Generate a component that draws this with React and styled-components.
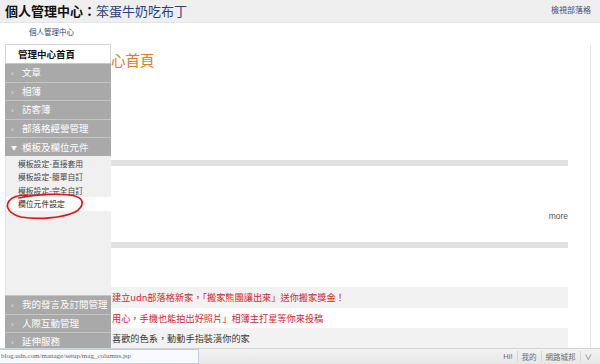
import React from "react";
import styled, { createGlobalStyle } from "styled-components";

const Global = createGlobalStyle`
  html, body { margin: 0; padding: 0; background: #fff; }
  body { font-family: "Noto Sans CJK TC", "Noto Sans", sans-serif; overflow: hidden; }
  * { box-sizing: border-box; }
`;

const Page = styled.div`
  width: 600px;
  height: 364px;
  position: relative;
  overflow: hidden;
`;

const Header = styled.header`
  height: 23px;
  background: #efefef;
  border-bottom: 1px solid #e6e6e6;
  display: flex;
  align-items: center;
  justify-content: space-between;
  padding: 0 9px 0 5px;
`;

const Title = styled.h1`
  margin: 0;
  font-size: 13px;
  line-height: 16px;
  font-weight: 700;
  color: #111;
  white-space: nowrap;
`;

const BlogName = styled.span`
  font-weight: 400;
  color: #2b3f7e;
`;

const HeaderLink = styled.a`
  font-size: 8px;
  color: #3b4f86;
  text-decoration: none;
  margin-top: -3px;
`;

const Breadcrumb = styled.div`
  height: 21px;
  line-height: 18px;
  padding-left: 29px;
  font-size: 7.5px;
  color: #34466f;
`;

const Body = styled.div`
  width: 591px;
  height: 320px;
  display: flex;
  padding-left: 5px;
  border-right: 1px solid #e8e8e8;
`;

const Sidebar = styled.nav`
  width: 106px;
  flex: none;
  position: relative;
  display: flex;
  flex-direction: column;
`;

const HomeItem = styled.div`
  height: 19px;
  background: #fff;
  border: 1px solid #d4d4d4;
  border-bottom: none;
  font-size: 9.5px;
  font-weight: 700;
  color: #111;
  line-height: 18px;
  padding-left: 12px;
`;

const MenuItem = styled.div`
  height: 18.6px;
  background: #a9a9a9;
  border-top: 1px solid #c6c6c6;
  color: #fff;
  font-size: 9.5px;
  line-height: 17px;
  display: flex;
  align-items: center;
  padding-left: 6px;
  white-space: nowrap;
`;

const Arrow = styled.span`
  width: 11px;
  flex: none;
  font-size: ${(p) => (p.$open ? "6px" : "8px")};
  color: #f4f4f4;
`;

const SubMenu = styled.div`
  height: 139px;
  background: #f0f0f0;
  border-left: 1px solid #e2e2e2;
  padding-top: 1px;
  display: flex;
  flex-direction: column;
`;

const SubItem = styled.div`
  height: 13.5px;
  line-height: 13.5px;
  font-size: 7.8px;
  color: ${(p) => (p.$active ? "#222" : "#444")};
  background: ${(p) => (p.$active ? "#fff" : "transparent")};
  padding-left: 12px;
  white-space: nowrap;
`;

const Circle = styled.svg`
  position: absolute;
  left: 0;
  top: 149px;
  width: 90px;
  height: 30px;
  overflow: visible;
  pointer-events: none;
`;

const Main = styled.main`
  width: 457px;
  flex: none;
  overflow: hidden;
  display: flex;
  flex-direction: column;
`;

const Heading = styled.h2`
  margin: 6px 0 0;
  font-size: 14.5px;
  line-height: 20px;
  font-weight: 400;
  color: #e07b28;
  white-space: nowrap;
`;

const Bar = styled.div`
  height: 6px;
  background: #e1e1e1;
  margin-top: ${(p) => p.$gap}px;
`;

const More = styled.div`
  margin-top: 44px;
  height: 12px;
  line-height: 12px;
  text-align: right;
  font-size: 8.5px;
  color: #555;
  font-family: "Liberation Sans", Arial, sans-serif;
`;

const News = styled.div`
  margin-top: 39px;
  display: flex;
  flex-direction: column;
`;

const NewsRow = styled.div`
  height: ${(p) => p.$h}px;
  background: ${(p) => (p.$shade ? "#f2f2f2" : "#fff")};
  font-size: 9.2px;
  line-height: ${(p) => p.$h}px;
  color: ${(p) => (p.$plain ? "#3a3a3a" : "#d0262a")};
  white-space: nowrap;
  padding-left: 1px;
`;

const StatusBar = styled.footer`
  position: absolute;
  left: 0;
  right: 0;
  bottom: 0;
  height: 16px;
  background: linear-gradient(#f3f3f3, #e7e7e7);
  border-top: 1px solid #d2d2d2;
  display: flex;
  align-items: center;
  justify-content: space-between;
`;

const UrlBox = styled.div`
  width: 199px;
  height: 15px;
  background: #f8fafd;
  border: 1px solid #c3ccd8;
  border-left: none;
  font-family: "Liberation Serif", serif;
  font-size: 7px;
  line-height: 13px;
  color: #666;
  padding-left: 1px;
  white-space: nowrap;
  overflow: hidden;
`;

const StatusLinks = styled.div`
  display: flex;
  align-items: center;
  padding-right: 4px;
  font-size: 7.5px;
  color: #6a6a6a;
`;

const StatusLink = styled.span`
  padding: 0 4px;
  border-left: ${(p) => (p.$first ? "none" : "1px solid #d6d6d6")};
  line-height: 11px;
  font-family: ${(p) => (p.$latin ? '"Liberation Sans", Arial, sans-serif' : "inherit")};
`;

const mainMenu = ["文章", "相簿", "訪客簿", "部落格經營管理"];
const subMenu = ["模板設定-直接套用", "模板設定-簡單自訂", "模板設定-完全自訂"];
const bottomMenu = ["我的發言及訂閱管理", "人際互動管理", "延伸服務"];

export default function App() {
  return (
    <Page>
      <Global />
      <Header>
        <Title>
          個人管理中心：<BlogName>笨蛋牛奶吃布丁</BlogName>
        </Title>
        <HeaderLink href="#">檢視部落格</HeaderLink>
      </Header>
      <Breadcrumb>個人管理中心</Breadcrumb>
      <Body>
        <Sidebar>
          <HomeItem>管理中心首頁</HomeItem>
          {mainMenu.map((m) => (
            <MenuItem key={m}>
              <Arrow>›</Arrow>
              {m}
            </MenuItem>
          ))}
          <MenuItem>
            <Arrow $open>▼</Arrow>
            模板及欄位元件
          </MenuItem>
          <SubMenu>
            {subMenu.map((s) => (
              <SubItem key={s}>{s}</SubItem>
            ))}
            <SubItem $active>欄位元件設定</SubItem>
          </SubMenu>
          {bottomMenu.map((m) => (
            <MenuItem key={m}>
              <Arrow>›</Arrow>
              {m}
            </MenuItem>
          ))}
          <Circle viewBox="0 0 90 30">
            <path
              d="M14 5 C30 1, 58 0, 70 3 C80 6, 79 14, 70 19 C58 25, 32 27, 16 24 C4 21, 0 14, 4 8 C7 4, 14 2, 22 2"
              fill="none"
              stroke="#e3141b"
              strokeWidth="1.7"
              strokeLinecap="round"
            />
          </Circle>
        </Sidebar>
        <Main>
          <Heading>心首頁</Heading>
          <Bar $gap={90} />
          <More>more</More>
          <Bar $gap={20} />
          <News>
            <NewsRow $h={21} $shade>
              建立udn部落格新家，「搬家熊團讓出來」送你搬家獎金！
            </NewsRow>
            <NewsRow $h={20}>
              用心，手機也能拍出好照片」相簿主打星等你來投稿
            </NewsRow>
            <NewsRow $h={20} $shade $plain>
              喜歡的色系，動動手指裝潢你的家
            </NewsRow>
          </News>
        </Main>
      </Body>
      <StatusBar>
        <UrlBox>blog.udn.com/manage/setup/mag_columns.jsp</UrlBox>
        <StatusLinks>
          <StatusLink $first $latin>Hi!</StatusLink>
          <StatusLink>我的</StatusLink>
          <StatusLink>網路城邦</StatusLink>
          <StatusLink>∨</StatusLink>
        </StatusLinks>
      </StatusBar>
    </Page>
  );
}
